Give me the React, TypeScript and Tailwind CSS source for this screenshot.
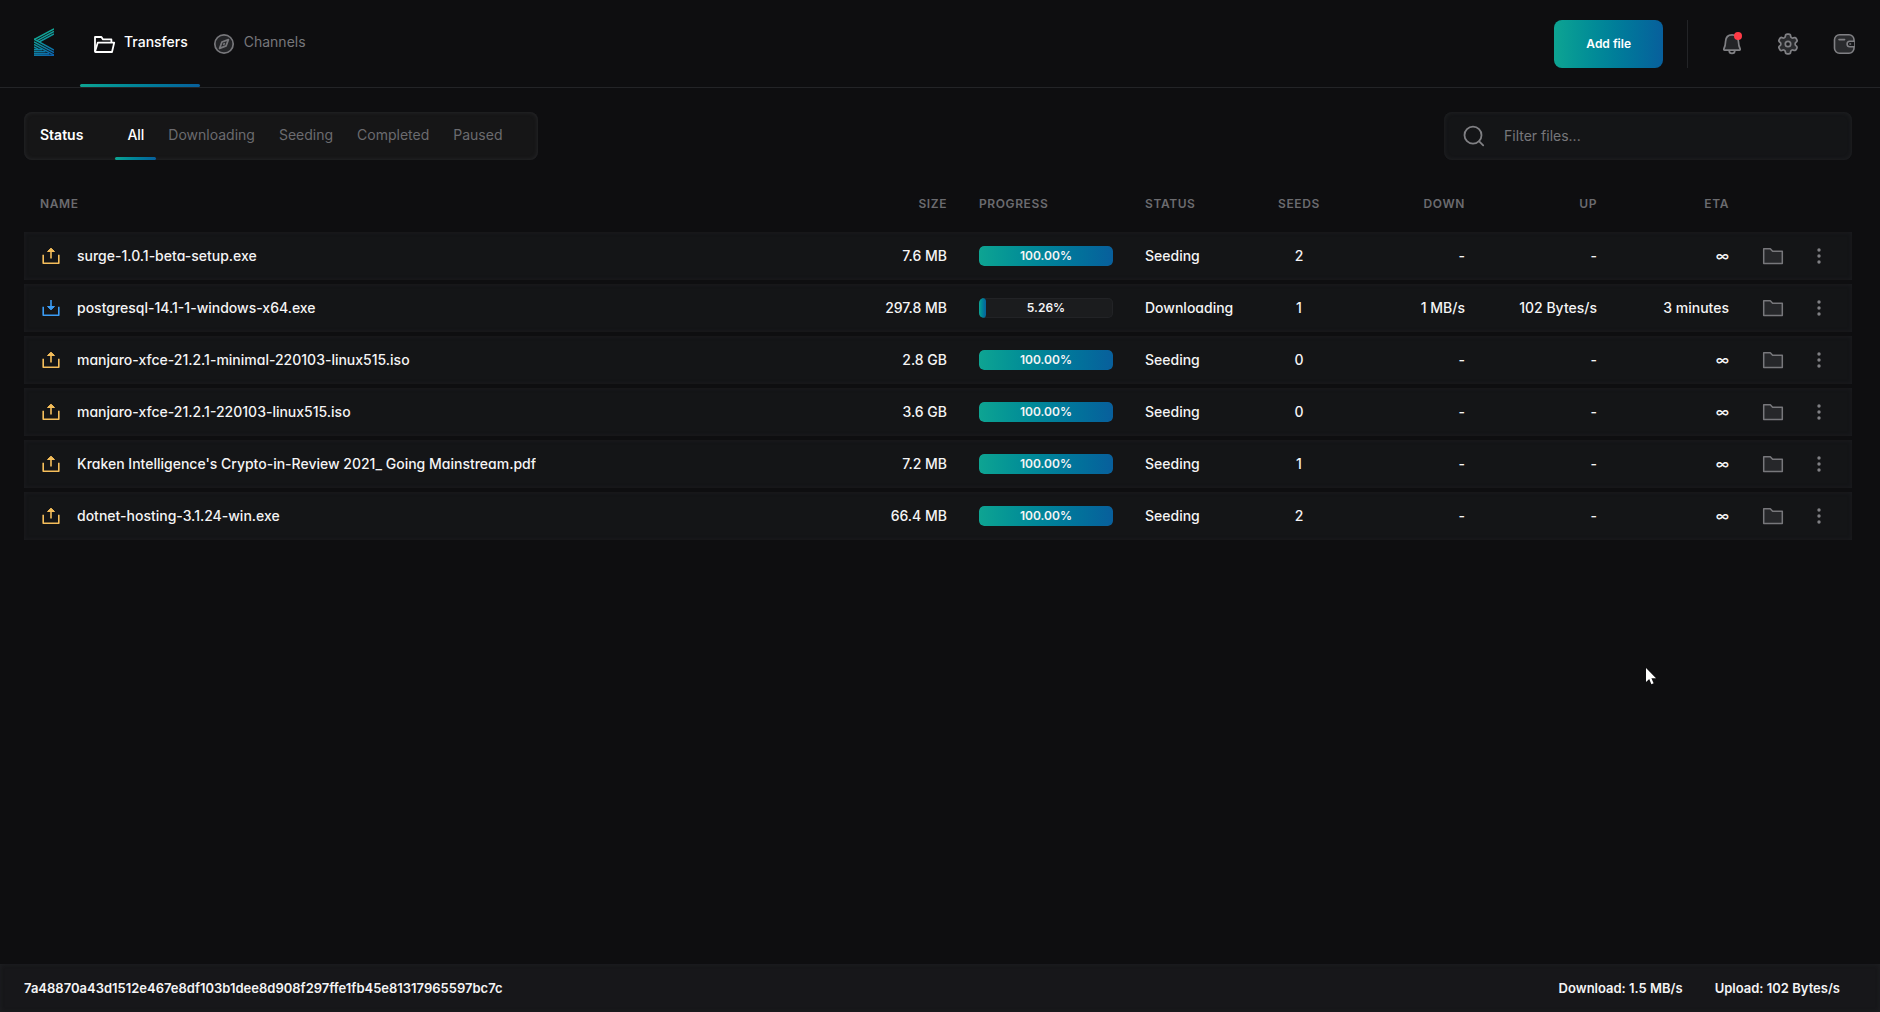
import { useState } from 'react'
import type { ReactNode } from 'react'

type Transfer = {
  name: string
  size: string
  progress: number
  status: 'Seeding' | 'Downloading'
  seeds: number
  down: string
  up: string
  eta: string
}

const transfers: Transfer[] = [
  { name: 'surge-1.0.1-beta-setup.exe', size: '7.6 MB', progress: 100, status: 'Seeding', seeds: 2, down: '-', up: '-', eta: '∞' },
  { name: 'postgresql-14.1-1-windows-x64.exe', size: '297.8 MB', progress: 5.26, status: 'Downloading', seeds: 1, down: '1 MB/s', up: '102 Bytes/s', eta: '3 minutes' },
  { name: 'manjaro-xfce-21.2.1-minimal-220103-linux515.iso', size: '2.8 GB', progress: 100, status: 'Seeding', seeds: 0, down: '-', up: '-', eta: '∞' },
  { name: 'manjaro-xfce-21.2.1-220103-linux515.iso', size: '3.6 GB', progress: 100, status: 'Seeding', seeds: 0, down: '-', up: '-', eta: '∞' },
  { name: "Kraken Intelligence's Crypto-in-Review 2021_ Going Mainstream.pdf", size: '7.2 MB', progress: 100, status: 'Seeding', seeds: 1, down: '-', up: '-', eta: '∞' },
  { name: 'dotnet-hosting-3.1.24-win.exe', size: '66.4 MB', progress: 100, status: 'Seeding', seeds: 2, down: '-', up: '-', eta: '∞' },
]

const filters = ['All', 'Downloading', 'Seeding', 'Completed', 'Paused']

function Logo() {
  return (
    <svg width="20" height="28" viewBox="0 0 20 28" fill="none" aria-hidden="true">
      <defs>
        <linearGradient id="logo" x1="4" y1="4" x2="16" y2="28" gradientUnits="userSpaceOnUse">
          <stop stopColor="#12b393" />
          <stop offset="1" stopColor="#0b62ad" />
        </linearGradient>
      </defs>
      <g stroke="url(#logo)" strokeWidth="1.5">
        <path d="M20 .8 0 11.6M20 3.4 2.5 12.8M20 6 5 14" />
        <path d="M0 11.2 20 22M0 13.8 20 24.6M0 16.4 20 27.2M0 19 4 21.2" />
        <path d="M0 21.6h8M0 23.5h11.5M0 25.4h15M0 27.3h20" />
      </g>
    </svg>
  )
}

function FolderOpenIcon() {
  return (
    <svg width="24" height="24" viewBox="0 0 24 24" fill="none" stroke="currentColor" strokeWidth="1.8" strokeLinejoin="round" aria-hidden="true">
      <path d="M3 19.6V5h6.4l1.6 2.400h8.400v3.200" />
      <path d="M3 19.8 5.800 10.600h16.400L20 20H3.400z" />
    </svg>
  )
}

function CompassIcon() {
  return (
    <svg width="24" height="24" viewBox="0 0 24 24" fill="none" stroke="currentColor" strokeWidth="1.7" strokeLinejoin="round" aria-hidden="true">
      <circle cx="12" cy="12" r="9.2" fill="#232427" />
      <path d="m16.4 7.6-2.3 6.3-6.5 2.5 2.3-6.4z" />
      <path d="m11.2 12.8 1.6-1.6" />
    </svg>
  )
}

function BellIcon() {
  return (
    <svg width="24" height="24" viewBox="0 0 24 24" fill="none" stroke="#808084" strokeWidth="1.7" strokeLinejoin="round" aria-hidden="true">
      <path d="M12 2.8c-4 0-6.2 2.8-6.4 6.4-.2 4.2-.7 5.6-1.6 7.3-.5 1-.1 1.7.6 1.7h14.8c.7 0 1.1-.7.6-1.7-.9-1.7-1.4-3.1-1.6-7.3C18.2 5.6 16 2.8 12 2.8z" fill="#232427" />
      <path d="M9.2 18.4c0 1.8 1.2 3 2.8 3s2.8-1.2 2.8-3" />
    </svg>
  )
}

function GearIcon() {
  return (
    <svg width="24" height="24" viewBox="0 0 24 24" stroke="#808084" strokeWidth="1.7" strokeLinejoin="round" aria-hidden="true">
      <path
        fill="#2a2b2e"
        d="M20.8 7.6l-.6-1.1c-.5-.9-1.7-1.2-2.6-.7-1.2.7-3-.2-3-1.7 0-1.1-.9-1.9-1.9-1.9h-1.4c-1.1 0-1.9.9-1.9 1.9 0 1.5-1.8 2.4-3 1.7-.9-.5-2.100-.2-2.600.7l-.6 1.100c-.5.9-.2 2.100.7 2.600 1.300.8 1.300 2.800 0 3.600-.9.5-1.200 1.700-.7 2.600l.6 1.100c.5.9 1.700 1.200 2.600.7 1.200-.7 3 .2 3 1.700 0 1.100.9 1.900 1.900 1.900h1.400c1.100 0 1.900-.9 1.900-1.900 0-1.500 1.800-2.400 3-1.700.9.5 2.100.2 2.600-.7l.6-1.100c.5-.9.2-2.100-.7-2.600-1.300-.8-1.300-2.800 0-3.600.9-.5 1.200-1.700.7-2.600z"
      />
      <circle cx="12" cy="12" r="2.7" fill="#16171a" />
    </svg>
  )
}

function WalletIcon() {
  return (
    <svg width="24" height="24" viewBox="0 0 24 24" fill="none" stroke="#808084" strokeWidth="1.6" strokeLinecap="round" aria-hidden="true">
      <rect x="2.5" y="2.8" width="19.5" height="18.4" rx="5" fill="#2a2b2e" />
      <path d="M22 9.3h-4.2a2.7 2.7 0 0 0 0 5.4H22" fill="#16171a" />
      <path d="M7 7.6h5.600M18 12h.5" />
    </svg>
  )
}

function SearchIcon() {
  return (
    <svg width="24" height="24" viewBox="0 0 24 24" fill="none" stroke="#808084" strokeWidth="1.8" strokeLinecap="round" aria-hidden="true">
      <circle cx="11" cy="11.2" r="8.5" />
      <path d="m17.2 17.400 4 4" />
    </svg>
  )
}

function TransferIcon({ downloading }: { downloading: boolean }) {
  return (
    <svg
      width="20"
      height="20"
      viewBox="0 0 20 20"
      fill="none"
      strokeLinejoin="round"
      className={`shrink-0 ${downloading ? 'text-[#3a9bf4]' : 'text-[#f5be5b]'}`}
      aria-hidden="true"
    >
      <path d="M2.200 8.700v8.600h15.600V8.700" stroke="currentColor" strokeWidth="1.6" />
      {downloading ? (
        <>
          <path d="M10 2v7" stroke="currentColor" strokeWidth="2" opacity=".8" />
          <path d="M6.500 8.500 10 11.800l3.500-3.300z" fill="currentColor" stroke="currentColor" />
        </>
      ) : (
        <>
          <path d="M10 4v8.500" stroke="currentColor" strokeWidth="2" opacity=".8" />
          <path d="M6.500 5.500 10 2.200l3.500 3.300z" fill="currentColor" stroke="currentColor" />
        </>
      )}
    </svg>
  )
}

function FolderIcon() {
  return (
    <svg width="24" height="24" viewBox="0 0 24 24" fill="#26272a" stroke="#77777b" strokeWidth="1.5" strokeLinejoin="round" aria-hidden="true">
      <path d="M2.700 19.500V4.700h6.600l2.300 2.600h9.700v12.200z" />
    </svg>
  )
}

function MoreIcon() {
  return (
    <svg width="24" height="24" viewBox="0 0 24 24" fill="#808084" aria-hidden="true">
      <circle cx="12" cy="6" r="1.700" />
      <circle cx="12" cy="12" r="1.700" />
      <circle cx="12" cy="18" r="1.700" />
    </svg>
  )
}

function NavLink({ icon, label, active = false }: { icon: ReactNode; label: string; active?: boolean }) {
  return (
    <a
      href="#"
      className={`relative flex items-center gap-2 px-3 text-sm ${active ? 'font-medium text-white' : 'text-[#77777b]'}`}
    >
      {icon}
      <span className="pb-1">{label}</span>
      {active && (
        <span className="absolute inset-x-0 bottom-0 h-[3px] rounded-sm bg-linear-to-r from-[#0ea492] to-[#085f9c]" />
      )}
    </a>
  )
}

function ProgressBar({ value }: { value: number }) {
  return (
    <div className="relative h-5 overflow-hidden rounded-[5px] bg-[#1b1c1e] inset-ring inset-ring-[#222326]">
      <div
        className="h-full rounded-[5px] bg-linear-to-r from-[#0ea492] to-[#085f9c]"
        style={{ width: `${value}%` }}
      />
      <span className="absolute inset-0 text-center text-xs leading-5 font-semibold">
        {value.toFixed(2)}%
      </span>
    </div>
  )
}

function TransferRow({ item }: { item: Transfer }) {
  return (
    <tr className="h-12 bg-[#141517] shadow-[inset_0_0_4px_#1c1d20]">
      <td className="px-4">
        <div className="flex items-center gap-4 pl-px">
          <TransferIcon downloading={item.status === 'Downloading'} />
          <span className="truncate">{item.name}</span>
        </div>
      </td>
      <td className="px-4 text-right">{item.size}</td>
      <td className="px-4">
        <ProgressBar value={item.progress} />
      </td>
      <td className="px-4">{item.status}</td>
      <td className="px-4 text-center">{item.seeds}</td>
      <td className="px-4 text-right">{item.down}</td>
      <td className="px-4 text-right">{item.up}</td>
      <td className="px-4 text-right">{item.eta}</td>
      <td className="px-4">
        <button type="button" aria-label="Open folder" className="block">
          <FolderIcon />
        </button>
      </td>
      <td className="px-1.5">
        <button type="button" aria-label="More actions" className="block">
          <MoreIcon />
        </button>
      </td>
    </tr>
  )
}

export default function App() {
  const [filter, setFilter] = useState('All')

  return (
    <div className="flex min-h-screen flex-col bg-[#0e0e10] font-['Inter',sans-serif] text-sm text-[#f4f4f5]">
      <header className="flex h-22 border-b border-[#232427] px-6">
        <a href="#" aria-label="Home" className="mr-4 flex w-10 items-center justify-center pb-1">
          <Logo />
        </a>
        <nav className="flex">
          <NavLink icon={<FolderOpenIcon />} label="Transfers" active />
          <NavLink icon={<CompassIcon />} label="Channels" />
        </nav>
        <div className="ml-auto flex items-center">
          <button
            type="button"
            className="h-12 rounded-lg bg-linear-to-r from-[#0ea492] to-[#085f9c] px-8 text-xs font-semibold text-white"
          >
            Add file
          </button>
          <div className="mx-6 h-12 border-l border-[#232427]" />
          <div className="ml-2 flex gap-8">
            <button type="button" aria-label="Notifications" className="relative">
              <BellIcon />
              <span className="absolute top-0 right-0.5 size-2 rounded-full bg-[#ff3b47]" />
            </button>
            <button type="button" aria-label="Settings">
              <GearIcon />
            </button>
            <button type="button" aria-label="Wallet">
              <WalletIcon />
            </button>
          </div>
        </div>
      </header>

      <main className="flex-1 pt-6 pr-7 pl-6">
        <div className="flex items-center justify-between">
          <div className="flex h-12 rounded-lg bg-[#161617] pr-6 pl-4 shadow-[inset_0_0_4px_#2a2b2e]">
            <span className="mr-8 self-center pb-0.5 font-semibold text-white">Status</span>
            {filters.map((name) => (
              <button
                key={name}
                type="button"
                onClick={() => setFilter(name)}
                className={`relative px-3 pb-0.5 ${filter === name ? 'font-medium text-white' : 'text-[#6b6b6f]'}`}
              >
                {name}
                {filter === name && (
                  <span className="absolute inset-x-0 bottom-0 h-[3px] rounded-sm bg-linear-to-r from-[#0ea492] to-[#085f9c]" />
                )}
              </button>
            ))}
          </div>
          <label className="flex h-12 w-102 items-center gap-4.5 rounded-lg bg-[#141517] px-4.5 shadow-[inset_0_0_4px_#232427]">
            <SearchIcon />
            <input
              type="text"
              aria-label="Filter files"
              placeholder="Filter files..."
              className="min-w-0 flex-1 bg-transparent outline-none placeholder:text-[#77777b]"
            />
          </label>
        </div>

        <table className="mt-5 w-full table-fixed border-separate border-spacing-x-0 border-spacing-y-1 font-medium">
          <colgroup>
            <col />
            <col className="w-30" />
            <col className="w-[166px]" />
            <col className="w-30" />
            <col className="w-25" />
            <col className="w-33" />
            <col className="w-33" />
            <col className="w-33" />
            <col className="w-14" />
            <col className="w-[51px]" />
          </colgroup>
          <thead>
            <tr className="h-11 text-left text-xs tracking-wider text-[#6b6b6f] uppercase">
              <th className="px-4 pb-1 font-semibold">Name</th>
              <th className="px-4 pb-1 text-right font-semibold">Size</th>
              <th className="px-4 pb-1 font-semibold">Progress</th>
              <th className="px-4 pb-1 font-semibold">Status</th>
              <th className="px-4 pb-1 text-center font-semibold">Seeds</th>
              <th className="px-4 pb-1 text-right font-semibold">Down</th>
              <th className="px-4 pb-1 text-right font-semibold">Up</th>
              <th className="px-4 pb-1 text-right font-semibold">ETA</th>
              <td />
              <td />
            </tr>
          </thead>
          <tbody className="[font-feature-settings:'cv11']">
            {transfers.map((item) => (
              <TransferRow key={item.name} item={item} />
            ))}
          </tbody>
        </table>
      </main>

      <footer className="flex h-12 items-center justify-between bg-[#17171a] pr-10 pl-6 text-[13px] font-semibold shadow-[inset_0_0_4px_#1f2023]">
        <span>7a48870a43d1512e467e8df103b1dee8d908f297ffe1fb45e81317965597bc7c</span>
        <div className="flex gap-8">
          <span>Download: 1.5 MB/s</span>
          <span>Upload: 102 Bytes/s</span>
        </div>
      </footer>

      <svg className="pointer-events-none absolute top-[667px] left-[1645px]" width="12" height="19" viewBox="0 0 12 19" aria-hidden="true">
        <path d="M1 1v14l3.200-3 2.200 5.200 2.200-1-2.200-5H11z" fill="#fff" />
      </svg>
    </div>
  )
}
